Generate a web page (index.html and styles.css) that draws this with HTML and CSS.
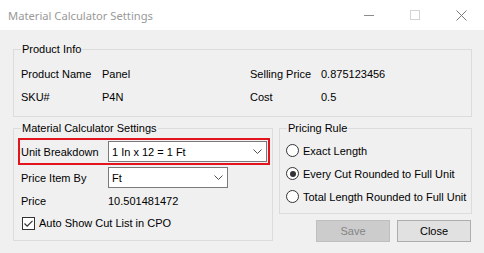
FILE: index.html
```html
<!DOCTYPE html>
<html>
<head>
<meta charset="utf-8">
<title>Material Calculator Settings</title>
<link rel="stylesheet" href="styles.css">
</head>
<body>
<div class="window">
  <div class="titlebar">
    <span class="title">Material Calculator Settings</span>
    <div class="caps">
      <span class="cap"><svg width="10" height="10" viewBox="0 0 10 10"><path d="M0 5.5H10" stroke="#8c8c8c" stroke-width="1"/></svg></span>
      <span class="cap"><svg width="10" height="10" viewBox="0 0 10 10"><rect x="0.5" y="0.5" width="9" height="9" fill="none" stroke="#d4d4d4" stroke-width="1"/></svg></span>
      <span class="cap"><svg width="11" height="11" viewBox="0 0 11 11"><path d="M0.5 0.5L10.5 10.5M10.5 0.5L0.5 10.5" stroke="#7a7a7a" stroke-width="1"/></svg></span>
    </div>
  </div>
  <div class="client">
    <fieldset class="group product">
      <legend>Product Info</legend>
      <div class="info-grid">
        <span>Product Name</span><span>Panel</span><span>Selling Price</span><span>0.875123456</span>
        <span>SKU#</span><span>P4N</span><span>Cost</span><span>0.5</span>
      </div>
    </fieldset>
    <div class="lower">
      <fieldset class="group calc">
        <legend>Material Calculator Settings</legend>
        <div class="row hl">
          <span class="lbl">Unit Breakdown</span>
          <div class="combo wide"><span>1 In x 12 = 1 Ft</span><svg class="chev" width="9" height="5" viewBox="0 0 9 5"><path d="M0.5 0.5L4.5 4.5L8.5 0.5" fill="none" stroke="#505050" stroke-width="1"/></svg></div>
        </div>
        <div class="row second">
          <span class="lbl">Price Item By</span>
          <div class="combo narrow"><span>Ft</span><svg class="chev" width="9" height="5" viewBox="0 0 9 5"><path d="M0.5 0.5L4.5 4.5L8.5 0.5" fill="none" stroke="#505050" stroke-width="1"/></svg></div>
        </div>
        <div class="price"><span class="lbl">Price</span><span>10.501481472</span></div>
        <div class="check"><span class="box"><svg width="11" height="11" viewBox="0 0 11 11"><path d="M1.5 5.5L4.2 8.2L9.5 2.8" fill="none" stroke="#333" stroke-width="1.2"/></svg></span><span>Auto Show Cut List in CPO</span></div>
      </fieldset>
      <div class="side">
        <fieldset class="group rule">
          <legend>Pricing Rule</legend>
          <div class="radios">
            <div class="radio"><span class="circle"></span><span>Exact Length</span></div>
            <div class="radio"><span class="circle on"></span><span>Every Cut Rounded to Full Unit</span></div>
            <div class="radio"><span class="circle"></span><span>Total Length Rounded to Full Unit</span></div>
          </div>
        </fieldset>
        <div class="buttons">
          <button class="btn disabled">Save</button>
          <button class="btn">Close</button>
        </div>
      </div>
    </div>
  </div>
</div>
</body>
</html>
```
FILE: styles.css
```css
* { box-sizing: border-box; }
html, body { margin: 0; padding: 0; }
body {
  width: 484px;
  height: 253px;
  overflow: hidden;
  background: #f0f0f0;
  font-family: "Liberation Sans", Arial, sans-serif;
  font-size: 11px;
  color: #000;
}
.titlebar {
  height: 30px;
  background: #fff;
  display: flex;
  align-items: center;
  justify-content: space-between;
}
.title {
  padding-left: 8px;
  font-family: "Noto Sans", sans-serif;
  font-size: 11.2px;
  color: #999;
}
.caps { display: flex; height: 30px; }
.cap {
  width: 46px;
  display: flex;
  align-items: center;
  justify-content: center;
}
.cap svg { display: block; }
.client { padding: 13px 0 0 13px; }
fieldset.group {
  margin: 0;
  padding: 0;
  border: 1px solid #dcdcdc;
  min-width: 0;
}
legend {
  margin-left: 7px;
  padding: 0 1px;
  line-height: 13px;
  font-size: 11px;
}
.product { width: 459px; height: 74px; }
.info-grid {
  display: grid;
  grid-template-columns: 81px 148px 71px auto;
  grid-auto-rows: 23px;
  align-items: center;
  padding: 6px 0 0 7px;
}
.lower { display: flex; gap: 6px; margin-top: 5px; }
.calc { width: 260px; height: 119px; }
.row {
  display: flex;
  align-items: center;
  width: 252px;
  margin-left: 4px;
  padding: 1px;
  border: 2px solid transparent;
}
.row.hl { border-color: #e4141e; margin-top: 3px; }
.row.second { padding-top: 0; padding-bottom: 0; }
.lbl { width: 87px; flex: none; }
.combo {
  height: 21px;
  background: #fff;
  border: 1px solid #7a7a7a;
  display: flex;
  align-items: center;
  justify-content: space-between;
  padding: 0 4px 0 3px;
}
.combo.wide { width: 159px; }
.combo.narrow { width: 120px; }
.chev { display: block; }
.price {
  display: flex;
  height: 22px;
  line-height: 22px;
  margin-left: 7px;
}
.check {
  display: flex;
  align-items: center;
  height: 22px;
  margin-left: 8px;
  gap: 4px;
}
.box {
  width: 13px;
  height: 13px;
  border: 1px solid #333;
  background: #fff;
  display: flex;
  align-items: center;
  justify-content: center;
}
.box svg { display: block; }
.side { width: 193px; display: flex; flex-direction: column; }
.rule { width: 193px; height: 92px; }
.radios { padding-top: 4px; }
.radio {
  display: flex;
  align-items: center;
  height: 23px;
  margin-left: 6px;
  gap: 4px;
}
.circle {
  width: 13px;
  height: 13px;
  border: 1px solid #333;
  border-radius: 50%;
  background: #fff;
  position: relative;
  flex: none;
}
.circle.on::after {
  content: "";
  position: absolute;
  left: 2.5px;
  top: 2.5px;
  width: 6px;
  height: 6px;
  border-radius: 50%;
  background: #333;
}
.buttons {
  display: flex;
  justify-content: flex-end;
  gap: 7px;
  margin-top: 6px;
  padding-right: 1px;
}
.btn {
  width: 74px;
  height: 22px;
  padding: 0;
  font-family: "Liberation Sans", Arial, sans-serif;
  font-size: 11px;
  color: #000;
  background: #e1e1e1;
  border: 1px solid #adadad;
}
.btn.disabled {
  background: #cccccc;
  border-color: #bfbfbf;
  color: #858585;
}
```
